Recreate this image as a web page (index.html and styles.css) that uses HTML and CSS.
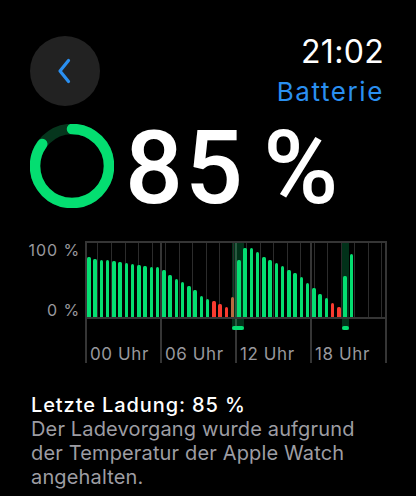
FILE: index.html
```html
<!DOCTYPE html>
<html lang="de">
<head>
    <meta charset="UTF-8">
    <meta name="viewport" content="width=device-width, initial-scale=1.0">
    <title>Batterie</title>
    <link rel="stylesheet" href="styles.css">
</head>
<body>

    <div class="header">
        <button class="back" aria-label="Zurück">
            <svg width="16" height="26" viewBox="0 0 16 26">
                <path d="M12.5 2.5 L4 13 L12.5 23.5" fill="none" stroke="#2a8ff0" stroke-width="3.2" stroke-linecap="round" stroke-linejoin="round"/>
            </svg>
        </button>
        <div class="title">
            <div class="time">21:02</div>
            <div class="app">Batterie</div>
        </div>
    </div>

    <div class="hero">
        <svg class="ring" width="84" height="84" viewBox="0 0 84 84">
            <circle cx="42" cy="42" r="37" fill="none" stroke="#06361d" stroke-width="10.5"/>
            <circle cx="42" cy="42" r="37" fill="none" stroke="#04de71" stroke-width="10.5"
                    stroke-linecap="round" stroke-dasharray="197.6 300" transform="rotate(-90 42 42)"/>
        </svg>
        <div class="level">85&nbsp;%</div>
    </div>

    <div class="chart">
        <div class="yaxis">
            <span>100&nbsp;%</span>
            <span>0&nbsp;%</span>
        </div>
        <div class="graph">
            <div class="band" style="left:147px;width:12px"></div>
            <div class="band" style="left:257px;width:7px"></div>
            <div class="plot">
                <div class="slot"><i class="bar" style="height:81%"></i></div>
                <div class="slot"><i class="bar" style="height:79%"></i></div>
                <div class="slot"><i class="bar" style="height:77%"></i></div>
                <div class="slot"><i class="bar" style="height:77%"></i></div>
                <div class="slot"><i class="bar" style="height:76%"></i></div>
                <div class="slot"><i class="bar" style="height:75%"></i></div>
                <div class="slot"><i class="bar" style="height:73%"></i></div>
                <div class="slot"><i class="bar" style="height:71%"></i></div>
                <div class="slot"><i class="bar" style="height:70%"></i></div>
                <div class="slot"><i class="bar" style="height:69%"></i></div>
                <div class="slot"><i class="bar" style="height:68%"></i></div>
                <div class="slot"><i class="bar" style="height:68%"></i></div>
                <div class="slot"><i class="bar" style="height:64%"></i></div>
                <div class="slot"><i class="bar" style="height:57%"></i></div>
                <div class="slot"><i class="bar" style="height:52%"></i></div>
                <div class="slot"><i class="bar" style="height:47%"></i></div>
                <div class="slot"><i class="bar" style="height:42%"></i></div>
                <div class="slot"><i class="bar" style="height:36%"></i></div>
                <div class="slot"><i class="bar" style="height:29%"></i></div>
                <div class="slot"><i class="bar" style="height:24%"></i></div>
                <div class="slot"><i class="bar low" style="height:22%"></i></div>
                <div class="slot"><i class="bar low" style="height:17%"></i></div>
                <div class="slot"><i class="bar low" style="height:14%"></i></div>
                <div class="slot"><i class="bar plug" style="height:27%"></i></div>
                <div class="slot"><i class="bar" style="height:77%"></i></div>
                <div class="slot"><i class="bar" style="height:93%"></i></div>
                <div class="slot"><i class="bar" style="height:93%"></i></div>
                <div class="slot"><i class="bar" style="height:88%"></i></div>
                <div class="slot"><i class="bar" style="height:81%"></i></div>
                <div class="slot"><i class="bar" style="height:77%"></i></div>
                <div class="slot"><i class="bar" style="height:73%"></i></div>
                <div class="slot"><i class="bar" style="height:69%"></i></div>
                <div class="slot"><i class="bar" style="height:64%"></i></div>
                <div class="slot"><i class="bar" style="height:60%"></i></div>
                <div class="slot"><i class="bar" style="height:54%"></i></div>
                <div class="slot"><i class="bar" style="height:46%"></i></div>
                <div class="slot"><i class="bar" style="height:39%"></i></div>
                <div class="slot"><i class="bar" style="height:31%"></i></div>
                <div class="slot"><i class="bar" style="height:26%"></i></div>
                <div class="slot"><i class="bar low" style="height:19%"></i></div>
                <div class="slot"><i class="bar low" style="height:14%"></i></div>
                <div class="slot"><i class="bar" style="height:56%"></i></div>
                <div class="slot"><i class="bar" style="height:85%"></i></div>
                <div class="slot"></div>
                <div class="slot"></div>
                <div class="slot"></div>
                <div class="slot"></div>
                <div class="slot"></div>
            </div>
            <div class="xaxis">
                <span>00 Uhr</span>
                <span>06 Uhr</span>
                <span>12 Uhr</span>
                <span>18 Uhr</span>
            </div>
        </div>
    </div>

    <div class="info">
        <div class="info-title">Letzte Ladung: 85&nbsp;%</div>
        <p>Der Ladevorgang wurde aufgrund der Temperatur der Apple Watch angehalten.</p>
    </div>

</body>
</html>
```

FILE: styles.css
```css
body {
    margin: 0;
    background-color: #000;
    color: #fff;
    font-family: Inter, "Noto Sans", sans-serif;
}
.header {
    display: flex;
    justify-content: space-between;
    padding: 36px 32px 0 30px;
}
.back {
    width: 70px;
    height: 70px;
    border: none;
    border-radius: 50%;
    background-color: #222;
    display: flex;
    align-items: center;
    justify-content: center;
    padding: 0 3px 0 0;
}
.title {
    text-align: right;
}
.time {
    font-size: 32px;
    line-height: 32px;
    letter-spacing: 0.3px;
}
.app {
    margin-top: 11px;
    font-size: 26px;
    line-height: 26px;
    color: #2a8ff0;
    letter-spacing: 1.6px;
}
.hero {
    display: flex;
    align-items: flex-start;
    margin-top: 10px;
    padding-left: 30px;
}
.ring {
    margin-top: 8px;
    flex: none;
}
.level {
    margin-left: 11px;
    font-family: Roboto, sans-serif;
    font-weight: 500;
    font-size: 102px;
    line-height: 104px;
    letter-spacing: 2px;
    word-spacing: -9px;
}
.chart {
    display: flex;
    margin-top: 21px;
    padding-left: 30px;
}
.yaxis {
    width: 50px;
    height: 76px;
    margin-top: 1px;
    margin-right: 5px;
    display: flex;
    flex-direction: column;
    justify-content: space-between;
    align-items: flex-end;
    font-size: 16px;
    line-height: 16px;
    letter-spacing: 0.9px;
    color: #98989d;
}
.graph {
    position: relative;
    width: 302px;
    background-image: repeating-linear-gradient(to right, #353535 0 2px, transparent 2px 75px);
}
.band {
    position: absolute;
    top: 0;
    height: 89px;
    background-color: rgba(4, 222, 113, 0.22);
}
.band::after {
    content: "";
    position: absolute;
    left: 0;
    right: 0;
    bottom: 0;
    height: 4px;
    border-radius: 2px;
    background-color: #04de71;
}
.plot {
    position: relative;
    display: flex;
    align-items: flex-end;
    height: 74px;
    border-top: 2px solid #353535;
    border-bottom: 2px solid #353535;
    background-image: repeating-linear-gradient(to right, transparent 0 12.5px, #2c2c2c 12.5px 13.5px, transparent 13.5px 12.5px);
    background-size: 300px 100%;
    background-repeat: no-repeat;
}
.slot {
    width: 6.25px;
    height: 100%;
    flex: none;
    display: flex;
    align-items: flex-end;
}
.bar {
    display: block;
    width: 3.5px;
    margin-left: 2.2px;
    border-radius: 1.5px 1.5px 0 0;
    background-color: #04de71;
}
.bar.low {
    background-color: #fa3b30;
}
.bar.plug {
    background-color: #b86a3f;
}
.xaxis {
    display: grid;
    grid-template-columns: repeat(4, 75px);
    height: 44px;
    font-size: 17px;
    line-height: 17px;
    letter-spacing: 0.6px;
    color: #98989d;
}
.xaxis span {
    align-self: end;
    padding-left: 5px;
}
.info {
    margin-top: 30px;
    padding: 0 30px 0 31px;
    font-size: 20px;
    line-height: 24px;
    letter-spacing: 0.15px;
}
.info-title {
    font-weight: 500;
    letter-spacing: 0.9px;
}
.info p {
    margin: 0;
    color: #9d9da3;
}
```
